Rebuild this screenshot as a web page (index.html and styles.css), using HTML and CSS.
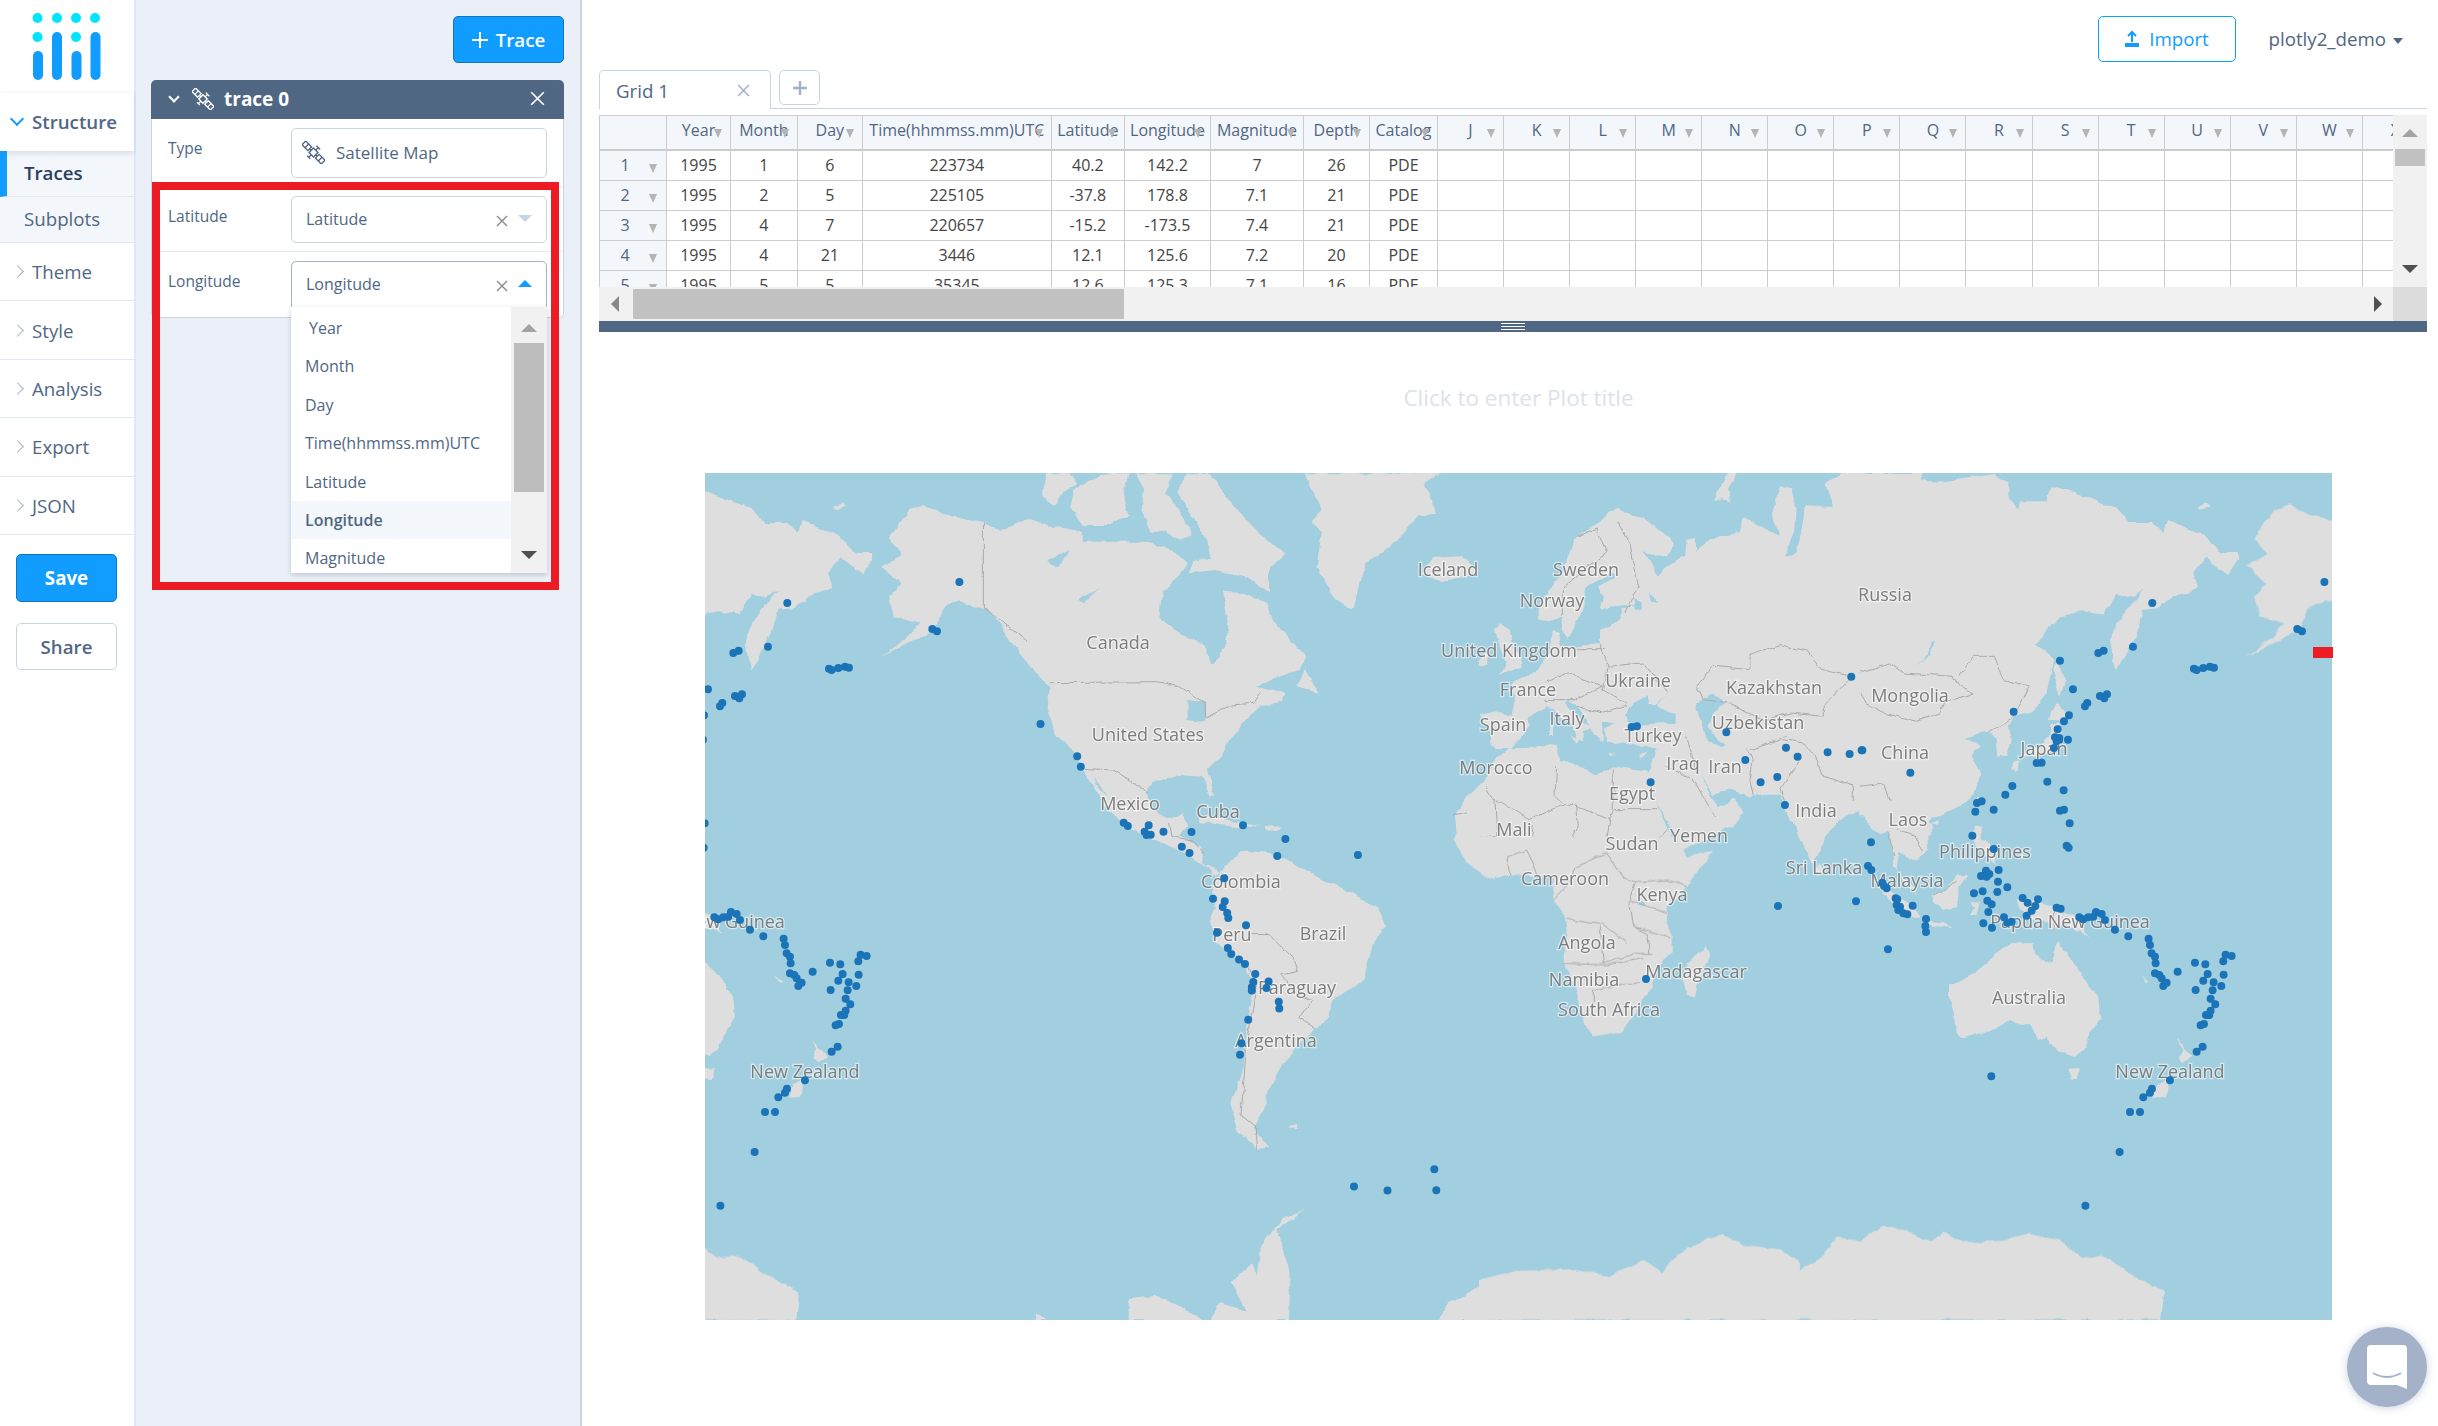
FILE: index.html
```html
<!DOCTYPE html>
<html>
<head>
  <meta charset="utf-8">
  <title>Chart Studio</title>
  <link rel="stylesheet" href="styles.css">
</head>
<body>
<svg class="sprites" width="0" height="0">
  <symbol id="ico-sat" viewBox="0 0 22 22">
    <g transform="rotate(45 11 11)" fill="none" stroke="currentColor" stroke-width="1.3">
      <rect x="8" y="8" width="6" height="6"/>
      <rect x="-2" y="8.5" width="8" height="5"/>
      <rect x="16" y="8.5" width="8" height="5"/>
      <path d="M6 11h2M14 11h2M2 8.5v5M20 8.5v5M11 8v-3M8.5 4.5h5M11 14v3M9 17.5h4"/>
    </g>
  </symbol>
  <symbol id="ico-x" viewBox="0 0 12 12">
    <path d="M1 1l10 10M11 1L1 11" fill="none" stroke="currentColor" stroke-width="1.4"/>
  </symbol>
</svg>

<div class="app">
  <!-- left nav -->
  <nav class="sidebar">
    <div class="logo">
      <svg width="135" height="93" viewBox="0 0 135 93">
        <g fill="#00e5ff">
          <circle cx="37.5" cy="18" r="5"/><circle cx="57" cy="18" r="5"/><circle cx="76" cy="18" r="5"/><circle cx="95" cy="18" r="5"/>
          <circle cx="37.5" cy="37" r="5"/><circle cx="76" cy="37" r="5"/>
        </g>
        <g fill="#119dff">
          <rect x="33" y="51" width="10" height="29" rx="5"/><rect x="52" y="32" width="10" height="48" rx="5"/>
          <rect x="71.500" y="51" width="10" height="29" rx="5"/><rect x="90.500" y="32" width="10" height="48" rx="5"/>
        </g>
      </svg>
    </div>
    <div class="nav-head"><span class="chev chev-down"></span>Structure</div>
    <div class="nav-sub nav-sub-active">Traces</div>
    <div class="nav-sub">Subplots</div>
    <div class="nav-item"><span class="chev"></span>Theme</div>
    <div class="nav-item"><span class="chev"></span>Style</div>
    <div class="nav-item"><span class="chev"></span>Analysis</div>
    <div class="nav-item"><span class="chev"></span>Export</div>
    <div class="nav-item"><span class="chev"></span>JSON</div>
    <button class="btn btn-save" type="button">Save</button>
    <button class="btn btn-share" type="button">Share</button>
  </nav>

  <!-- trace panel -->
  <section class="panel">
    <div class="panel-top">
      <button class="btn btn-trace" type="button">
        <svg width="16" height="16" viewBox="0 0 16 16"><path d="M8 0v16M0 8h16" stroke="#fff" stroke-width="2"/></svg>
        Trace
      </button>
    </div>
    <div class="card">
      <div class="card-head">
        <span class="head-chev"></span>
        <svg class="head-sat" width="22" height="22"><use href="#ico-sat"/></svg>
        <span class="head-title">trace 0</span>
        <svg class="head-x" width="15" height="15"><use href="#ico-x"/></svg>
      </div>
      <div class="field field-type">
        <label class="field-label">Type</label>
        <div class="select select-type">
          <svg class="type-sat" width="23" height="23"><use href="#ico-sat"/></svg>
          Satellite Map
        </div>
      </div>
      <div class="field field-lat">
        <label class="field-label">Latitude</label>
        <div class="select">
          <span class="select-val">Latitude</span>
          <svg class="select-x" width="12" height="12"><use href="#ico-x"/></svg>
          <span class="caret caret-down"></span>
        </div>
      </div>
      <div class="field field-lon">
        <label class="field-label">Longitude</label>
        <div class="select select-open">
          <span class="select-val">Longitude</span>
          <svg class="select-x" width="12" height="12"><use href="#ico-x"/></svg>
          <span class="caret caret-up"></span>
          <div class="dropdown">
            <ul class="options">
              <li class="option option-first">Year</li>
              <li class="option">Month</li>
              <li class="option">Day</li>
              <li class="option">Time(hhmmss.mm)UTC</li>
              <li class="option">Latitude</li>
              <li class="option option-active">Longitude</li>
              <li class="option">Magnitude</li>
            </ul>
            <div class="drop-scroll">
              <span class="tri tri-up tri-grey"></span>
              <span class="drop-thumb"></span>
              <span class="tri tri-down tri-dark"></span>
            </div>
          </div>
        </div>
      </div>
    </div>
    <div class="redbox"></div>
  </section>

  <main class="main">
    <header class="topbar">
      <button class="btn btn-import" type="button">
        <svg width="16" height="17" viewBox="0 0 16 17"><path d="M8 12V2M4 6l4-4 4 4" fill="none" stroke="#119dff" stroke-width="2"/><rect x="1" y="13" width="14" height="4" fill="#119dff"/></svg>
        Import
      </button>
      <span class="user">plotly2_demo<span class="user-caret"></span></span>
    </header>

    <div class="tabs">
      <div class="tab">Grid 1<svg class="tab-x" width="13" height="13"><use href="#ico-x"/></svg></div>
      <div class="tab-add">
        <svg width="14" height="14" viewBox="0 0 14 14"><path d="M7 0v14M0 7h14" stroke="#a2b1c6" stroke-width="2.4"/></svg>
      </div>
    </div>

    <div class="grid-wrap">
      <div class="grid-view">
        <table class="grid">
          <colgroup>
            <col class="c-idx"><col class="c-year"><col class="c-month"><col class="c-day"><col class="c-time"><col class="c-lat"><col class="c-lon"><col class="c-mag"><col class="c-depth"><col class="c-cat">
            <col class="c-col"><col class="c-col"><col class="c-col"><col class="c-col"><col class="c-col"><col class="c-col"><col class="c-col"><col class="c-col"><col class="c-col"><col class="c-col"><col class="c-col"><col class="c-col"><col class="c-col"><col class="c-col"><col class="c-col">
          </colgroup>
          <tr>
            <th></th><th>Year<i></i></th><th>Month<i></i></th><th>Day<i></i></th><th>Time(hhmmss.mm)UTC<i></i></th><th>Latitude<i></i></th><th>Longitude<i></i></th><th>Magnitude<i></i></th><th>Depth<i></i></th><th>Catalog<i></i></th>
            <th>J<i></i></th><th>K<i></i></th><th>L<i></i></th><th>M<i></i></th><th>N<i></i></th><th>O<i></i></th><th>P<i></i></th><th>Q<i></i></th><th>R<i></i></th><th>S<i></i></th><th>T<i></i></th><th>U<i></i></th><th>V<i></i></th><th>W<i></i></th><th>X<i></i></th>
          </tr>
          <tr><th class="row-no">1<i></i></th><td>1995</td><td>1</td><td>6</td><td>223734</td><td>40.2</td><td>142.2</td><td>7</td><td>26</td><td>PDE</td><td></td><td></td><td></td><td></td><td></td><td></td><td></td><td></td><td></td><td></td><td></td><td></td><td></td><td></td><td></td></tr>
          <tr><th class="row-no">2<i></i></th><td>1995</td><td>2</td><td>5</td><td>225105</td><td>-37.8</td><td>178.8</td><td>7.1</td><td>21</td><td>PDE</td><td></td><td></td><td></td><td></td><td></td><td></td><td></td><td></td><td></td><td></td><td></td><td></td><td></td><td></td><td></td></tr>
          <tr><th class="row-no">3<i></i></th><td>1995</td><td>4</td><td>7</td><td>220657</td><td>-15.2</td><td>-173.5</td><td>7.4</td><td>21</td><td>PDE</td><td></td><td></td><td></td><td></td><td></td><td></td><td></td><td></td><td></td><td></td><td></td><td></td><td></td><td></td><td></td></tr>
          <tr><th class="row-no">4<i></i></th><td>1995</td><td>4</td><td>21</td><td>3446</td><td>12.1</td><td>125.6</td><td>7.2</td><td>20</td><td>PDE</td><td></td><td></td><td></td><td></td><td></td><td></td><td></td><td></td><td></td><td></td><td></td><td></td><td></td><td></td><td></td></tr>
          <tr><th class="row-no">5<i></i></th><td>1995</td><td>5</td><td>5</td><td>35345</td><td>12.6</td><td>125.3</td><td>7.1</td><td>16</td><td>PDE</td><td></td><td></td><td></td><td></td><td></td><td></td><td></td><td></td><td></td><td></td><td></td><td></td><td></td><td></td><td></td></tr>
        </table>
      </div>
      <div class="vscroll">
        <span class="tri tri-up tri-grey"></span>
        <span class="vthumb"></span>
        <span class="tri tri-down tri-dark vdown"></span>
      </div>
      <div class="hscroll">
        <span class="tri tri-left"></span>
        <span class="hthumb"></span>
        <span class="tri tri-right"></span>
      </div>
      <div class="corner"></div>
    </div>
    <div class="splitter"><span class="grip"></span></div>

    <div class="plot">
      <div class="plot-title">Click to enter Plot title</div>
      <div class="map">
        <svg class="map-svg" width="1627" height="847" viewBox="705 473 1627 847">
          <defs>
            <!-- roughens the hand traced coasts -->
            <filter id="rough" filterUnits="userSpaceOnUse" x="705" y="473" width="1627" height="847">
              <feTurbulence type="fractalNoise" baseFrequency="0.07" numOctaves="3" seed="4"/>
              <feDisplacementMap in="SourceGraphic" scale="6" xChannelSelector="R" yChannelSelector="G"/>
            </filter>
            <g id="land">
              <!-- americas -->
              <g transform="translate(690 460) scale(.5102 .3333)">
                <polygon class="ld" points="390,230 430,150 460,135 500,165 575,190 610,210 660,175 700,195 770,215 770,245 890,245 950,270 975,310 960,350 925,395 920,470 960,520 1010,555 1020,620 1040,590 1050,550 1055,500 1045,395 1090,400 1130,430 1140,480 1208,590 1195,630 1135,660 1110,680 1165,700 1160,725 1120,735 1090,780 1060,830 1040,890 1015,930 1028,1005 1020,1010 1005,950 960,945 910,965 895,1000 905,1050 935,1075 965,1060 975,1100 960,1125 1000,1160 1010,1215 1040,1235 1030,1245 1005,1210 960,1175 900,1130 850,1095 810,1030 790,975 770,930 760,890 715,820 700,760 705,680 670,625 640,570 600,470 575,445 530,420 500,440 480,505 420,555 375,590 420,540 450,490 400,470 390,410 415,370 375,320 415,285"/>
                <polygon class="ld" points="690,105 700,40 745,40 760,70 730,100 715,135"/>
                <polygon class="ld" points="755,85 800,45 860,40 850,100 860,170 820,195 770,195 745,140"/>
                <polygon class="ld" points="875,40 945,40 935,100 960,150 985,230 960,240 930,215 905,215 885,150 890,90"/>
                <polygon class="ld" points="975,40 1020,40 1060,130 1110,210 1165,285 1135,320 1135,400 1090,350 1030,330 975,340 985,300 1020,290 1010,230 975,150 955,90"/>
                <polygon class="ld" points="1205,40 1470,40 1440,70 1455,130 1460,165 1430,165 1385,240 1325,310 1300,450 1265,420 1230,320 1240,215 1215,185 1240,150 1215,80"/>
                <polygon class="ld" points="1190,680 1205,625 1230,695"/>
                <polygon class="ld" points="1000,1068 1080,1085 1115,1095 1080,1103 1000,1085"/>
                <polygon class="ld" points="1125,1098 1160,1100 1150,1110 1125,1108"/>
                <polygon class="wt" points="975,720 1010,725 1012,770 1005,790 975,780"/>
                <polygon class="wt" points="790,945 818,1012 800,985"/>
                <polygon class="wt" points="700,300 745,270 720,325"/>
                <polygon class="wt" points="760,420 805,385 770,430"/>
                <polyline class="bd" points="575,190 575,445 600,470 640,520 660,545"/>
                <polyline class="bd" points="705,668 915,665 960,680 1010,730 1010,775 1060,735 1105,730 1120,695"/>
                <polyline class="bd" points="766,925 830,930 880,980 900,1000"/>
                <polyline class="bd" points="940,1090 945,1130 985,1140 1005,1180"/>
                <polyline class="bd" points="1090,1170 1085,1220 1110,1280 1105,1340 1050,1310"/>
                <polyline class="bd" points="1110,1290 1180,1290 1240,1260"/>
              </g>
              <!-- south america, antarctica -->
              <g transform="translate(690 900) scale(.5102 .3356)">
                <polygon class="ld" points="1040,-85 1080,-149 1140,-139 1180,-110 1240,-60 1300,-20 1345,25 1365,75 1340,120 1320,240 1260,300 1250,350 1195,425 1160,490 1130,580 1130,610 1105,680 1135,735 1112,745 1075,690 1060,610 1085,500 1095,330 1105,250 1085,190 1030,130 1020,50 1030,0 1025,-40"/>
                <polygon class="ld" points="1170,680 1190,670 1190,682"/>
                <polygon class="ld" points="860,1252 860,1190 910,1180 960,1210 1005,1252"/>
                <polygon class="ld" points="1020,1252 1040,1200 1090,1225 1060,1140 1100,1085 1110,1120 1120,1030 1160,950 1205,920 1150,980 1175,1110 1172,1252"/>
                <polygon class="ld" points="1470,1252 1480,1210 1568,1135 1568,1252"/>
                <polygon class="ld" points="680,1252 680,1235 700,1252"/>
                <polyline class="bd" points="1100,100 1135,100 1180,170 1190,210 1160,220 1195,290 1220,300 1195,350 1225,385"/>
                <polyline class="bd" points="1095,200 1110,250 1090,450 1080,640 1110,680 1112,745"/>
              </g>
              <g transform="translate(1480 900) scale(.6109 .3356)">
                <polygon class="ld" points="0,1135 60,1105 150,1100 210,1120 270,1075 300,1110 320,1060 395,990 430,1030 495,1045 520,1075 525,1105 550,1080 585,1005 620,1015 660,970 700,985 740,1015 760,990 790,1020 860,1015 900,995 950,1015 985,1065 1020,1060 1060,1110 1120,1165 1115,1252 0,1252"/>
              </g>
              <!-- europe, west asia -->
              <g transform="translate(1400 473) scale(.3333)">
                <polygon class="ld" points="1560,0 1560,1000 1430,1000 1395,1012 1345,1022 1275,1090 1265,1130 1232,1175 1215,1130 1190,1065 1170,1030 1150,1005 1140,965 1100,965 1050,972 1010,960 990,950 960,955 940,970 915,930 900,905 935,975 955,1000 995,985 1000,975 1033,1015 1000,1055 950,1085 895,1110 850,1130 835,1120 820,1075 795,1030 770,985 755,945 740,905 755,880 770,830 745,825 700,810 650,815 622,805 612,770 640,755 605,745 610,805 580,785 560,740 530,700 505,680 495,690 520,720 550,750 575,765 548,775 552,805 530,795 515,755 470,720 440,700 400,720 382,738 390,755 360,795 330,825 290,825 272,812 265,770 243,725 285,715 335,725 345,680 330,645 345,625 400,600 430,570 450,540 452,505 455,470 478,480 482,520 530,520 600,510 600,470 665,440 665,410 715,395 620,405 598,410 610,370 595,340 650,310 640,300 600,320 555,345 550,400 520,470 505,500 485,470 490,430 450,445 418,440 415,400 440,360 490,300 510,230 530,190 590,150 650,105 705,130 730,135 760,160 810,190 825,220 800,250 760,245 730,235 755,280 775,315 800,285 855,250 860,200 885,195 885,230 950,190 1020,180 1030,130 1075,155 1135,190 1115,110 1140,40 1175,45 1190,110 1185,180 1155,250 1190,240 1205,170 1215,100 1295,105 1290,55 1270,30 1330,0"/>
                <polygon class="ld" points="945,85 960,45 985,0 1010,0 985,50 990,90 970,75"/>
                <polygon class="ld" points="300,450 325,470 335,510 360,550 370,580 300,605 320,570 305,540 285,470"/>
                <polygon class="ld" points="235,560 265,535 265,575 240,582"/>
                <polygon class="ld" points="60,300 100,255 185,250 235,300 130,325"/>
                <polygon class="ld" points="510,790 545,795 535,810"/>
                <polygon class="ld" points="452,745 462,745 462,785 450,785"/>
                <polygon class="ld" points="720,845 745,838 725,855"/>
                <polygon class="ld" points="620,843 650,845 625,850"/>
                <polygon class="ld" points="1255,1170 1270,1190 1255,1210 1245,1190"/>
                <polygon class="wt" points="675,725 700,690 740,670 745,690 775,690 800,660 775,695 830,730 830,750 790,750 720,755 680,750"/>
                <polygon class="wt" points="890,690 940,660 980,690 940,720 925,760 960,810 975,815 960,825 920,800 905,740 890,710"/>
                <polygon class="wt" points="700,375 725,385 725,410 705,410"/>
                <polygon class="wt" points="750,360 765,370 770,390 755,385"/>
                <!-- africa north -->
                <polygon class="ld" points="325,825 290,855 250,925 200,975 165,1025 170,1085 160,1100 815,1100 780,1010 750,930 740,895 700,890 640,880 590,905 540,880 480,860 470,820 440,815 380,825"/>
                <g class="bds">
                  <polyline class="bd" points="890,640 940,580 1050,590 1050,545 1140,515 1225,535 1265,590 1355,610"/>
                  <polyline class="bd" points="890,640 910,680 990,690 1040,720 1100,740 1170,720 1270,730 1270,700 1330,640 1355,610"/>
                  <polyline class="bd" points="1150,800 1210,810 1250,850 1270,910 1360,940 1360,980 1390,990 1430,930 1470,930 1480,990"/>
                  <polyline class="bd" points="1040,830 1060,860 1050,920 1060,970"/>
                  <polyline class="bd" points="1200,860 1140,950 1160,1000"/>
                  <polyline class="bd" points="1050,830 1110,810 1160,790"/>
                  <polyline class="bd" points="860,790 890,900"/>
                  <polyline class="bd" points="800,880 880,920 950,1040"/>
                  <polyline class="bd" points="600,515 625,580 610,650 680,690"/>
                  <polyline class="bd" points="620,580 730,570 800,660"/>
                  <polyline class="bd" points="530,530 620,530"/>
                  <polyline class="bd" points="650,140 690,210 715,340 675,420"/>
                  <polyline class="bd" points="530,190 590,165 620,240 490,340 490,430"/>
                  <polyline class="bd" points="440,630 500,600 610,640 520,680 430,680"/>
                  <polyline class="bd" points="530,700 610,720 680,700"/>
                  <polyline class="bd" points="260,940 280,975 390,1040 490,995 530,1000 535,1060 510,1110"/>
                  <polyline class="bd" points="640,890 640,1010 775,1010"/>
                  <polyline class="bd" points="525,1000 630,1040 640,1010"/>
                  <polyline class="bd" points="630,1040 620,1100 610,1140"/>
                  <polyline class="bd" points="470,880 465,970 490,995"/>
                  <polyline class="bd" points="200,1020 160,1025"/>
                  <polyline class="bd" points="285,975 290,1090 215,1095 165,1100"/>
                  <polyline class="bd" points="400,1060 390,1130 220,1100"/>
                  <polyline class="bd" points="510,1110 500,1130 400,1120"/>
                  <polyline class="bd" points="610,1140 730,1140 800,1070"/>
                </g>
              </g>
              <!-- africa south -->
              <g transform="translate(1420 820) scale(.3333)">
                <polygon class="ld" points="102,60 140,130 210,180 300,165 400,170 400,240 435,290 440,340 430,420 465,500 500,625 520,650 600,635 660,565 665,540 700,500 705,450 755,395 755,345 740,310 745,260 800,200 850,130 880,95 800,110 780,80 755,50 102,50"/>
                <polygon class="ld" points="855,370 868,405 835,490 825,528 800,525 790,480 800,430 845,395"/>
                <polygon class="wt" points="655,245 675,245 670,258 655,258"/>
                <polyline class="bd" points="270,170 260,110 320,90 360,170"/>
                <polyline class="bd" points="560,100 470,140 440,200 400,240"/>
                <polyline class="bd" points="560,100 610,170 650,185 740,180 800,200"/>
                <polyline class="bd" points="650,185 630,250 640,320 680,340 690,400"/>
                <polyline class="bd" points="640,320 750,350"/>
                <polyline class="bd" points="440,295 540,310 550,430 650,400 700,400"/>
                <polyline class="bd" points="430,430 560,435 670,415"/>
                <polyline class="bd" points="520,510 620,490 660,490"/>
                <polyline class="bd" points="520,510 520,560"/>
                <polyline class="bd" points="630,240 740,280"/>
                <polyline class="bd" points="545,310 620,370"/>
              </g>
              <!-- east asia -->
              <g transform="translate(1860 473) scale(.3333)">
                <polygon class="ld" points="0,0 190,0 180,25 250,25 400,0 445,30 445,70 475,110 480,85 560,85 570,40 640,60 770,105 805,150 880,150 910,180 920,140 1020,180 1085,240 1130,240 1135,260 1105,305 1035,255 1000,300 1015,345 940,370 900,405 850,410 830,480 790,560 765,590 750,500 770,450 850,350 820,365 790,370 770,365 730,425 670,415 600,430 520,515 545,525 580,560 560,660 510,720 465,730 445,760 450,810 440,848 415,850 410,800 390,775 360,780 315,795 345,810 360,820 335,850 365,900 350,950 300,1000 240,1030 0,1030"/>
                <polygon class="ld" points="590,690 620,720 600,745 570,745 575,720"/>
                <polygon class="ld" points="575,760 600,750 610,800 585,830 530,850 490,850 500,835 550,810 570,790"/>
                <polygon class="ld" points="455,870 475,865 470,895 455,890"/>
                <polygon class="ld" points="585,570 605,590 615,625 600,670 590,640 580,590"/>
                <polygon class="ld" points="355,975 365,975 350,1010"/>
                <polygon class="ld" points="1010,100 1040,88 1050,98 1020,108"/>
                <polygon class="wt" points="225,505 200,560 160,585 195,560 215,510"/>
                <polyline class="bd" points="0,600 95,575 130,600 280,610 300,640 340,660 250,690 240,720 170,745 70,720 20,695 0,660"/>
                <polyline class="bd" points="300,610 340,550 400,550 430,620 510,640 480,700 460,730"/>
                <polyline class="bd" points="390,775 465,730"/>
                <polyline class="bd" points="0,940 70,930 90,990"/>
              </g>
              <!-- south east asia, oceania -->
              <g transform="translate(1800 800) scale(.3333)">
                <polygon class="ld" points="150,0 195,35 215,90 245,105 265,95 275,140 285,175 278,195 305,225 345,265 348,285 310,240 290,205 298,155 325,175 350,185 385,145 382,115 400,85 390,55 420,40 470,15 505,0"/>
                <polygon class="ld" points="450,555 540,510 600,450 640,430 700,430 705,465 755,490 775,420 800,460 850,530 895,590 900,650 870,700 850,750 820,770 770,750 740,710 715,720 690,670 630,665 560,695 490,715 470,700 465,640 450,590"/>
                <polygon class="ld" points="805,805 840,805 830,838 815,835"/>
                <polygon class="ld" points="1130,715 1150,745 1180,770 1150,790 1135,775 1145,750"/>
                <polygon class="ld" points="1110,835 1095,890 1060,893 1065,860"/>
                <polygon class="ld" points="650,300 675,290 720,310 780,330 830,350 865,408 840,390 790,375 760,390 740,370 690,350 660,330"/>
                <polygon class="ld" points="395,285 440,270 470,225 500,225 475,260 475,320 430,330 405,310"/>
                <polygon class="ld" points="225,230 280,280 340,320 360,350 330,350 280,310 240,265"/>
                <polygon class="ld" points="370,365 430,370 465,385 400,378"/>
                <polygon class="ld" points="510,310 540,300 530,345 510,345 525,320"/>
                <polygon class="ld" points="525,80 545,80 545,120 575,130 590,200 560,170 520,120"/>
                <polygon class="ld" points="395,70 415,60 410,75"/>
                <polygon class="ld" points="1025,530 1050,545 1040,548"/>
                <polyline class="bd" points="265,100 285,170"/>
                <polyline class="bd" points="290,90 345,110 370,150"/>
                <polyline class="bd" points="400,285 440,270 470,240"/>
                <polyline class="bd" points="760,330 760,390"/>
              </g>
            </g>

            <g id="quakes">
              <g transform="translate(1860 473) scale(.3333)">
                <path class="dots-z" d="M600 563h0M715 540h0M731 533h0M877 390h0M819 521h0M1002 587h0M1010 591h0M1030 585h0M1050 581h0M1062 584h0M639 649h0M720 669h0M741 664h0M733 676h0M682 690h0M675 700h0M461 716h0M627 727h0M612 745h0M593 769h0M624 800h0M585 793h0M598 795h0M590 805h0M598 800h0M582 825h0M530 870h0M545 869h0M562 926h0M611 952h0M457 939h0M436 965h0M365 985h0M351 990h0M346 1016h0M401 1010h0M600 1013h0M612 1010h0M629 1051h0M620 1118h0M626 1124h0M337 1088h0M401 1128h0M33 1108h0M7 832h0M151 899h0"/>
              </g>
              <g transform="translate(1800 800) scale(.3333)">
                <path class="dots-z" d="M204 198h0M214 210h0M247 248h0M252 258h0M260 265h0M287 295h0M292 298h0M168 304h0M290 315h0M300 320h0M295 330h0M310 340h0M322 343h0M338 317h0M378 357h0M376 378h0M378 396h0M264 448h0M596 210h0M558 212h0M568 222h0M543 228h0M560 230h0M594 245h0M622 262h0M592 276h0M548 274h0M522 280h0M562 302h0M575 313h0M565 336h0M550 370h0M576 383h0M612 352h0M622 368h0M635 365h0M668 294h0M683 308h0M714 298h0M706 318h0M695 332h0M680 347h0M770 323h0M782 326h0M838 352h0M850 358h0M865 352h0M880 350h0M888 336h0M905 342h0M915 360h0M945 389h0M985 409h0M1046 416h0M1050 435h0M1055 460h0M1065 470h0M1067 490h0M1065 520h0M1078 525h0M1085 535h0M1100 548h0M1090 558h0M1133 515h0M1185 488h0M1216 493h0M1277 464h0M1295 468h0M1270 484h0M1271 524h0M1223 522h0M1210 542h0M1241 547h0M1264 558h0M1187 570h0M1238 571h0M1232 596h0M1246 613h0M1232 632h0M1228 645h0M1218 645h0M1202 676h0M1212 672h0M1208 740h0M1190 755h0M1110 841h0M1056 866h0M1050 878h0M1030 892h0M574 829h0"/>
              </g>
              <g transform="translate(1400 473) scale(.3333)">
                <path class="dots-z" d="M1354 611h0M1158 824h0M1193 851h0M1283 838h0M1349 843h0M1385 832h0M1036 861h0M1132 912h0M1082 928h0M1155 996h0M752 928h0M979 778h0M695 762h0M711 760h0"/>
              </g>
              <path class="dots-p" d="M2130 1112h0M2140 1112h0M2119.600 1152h0M2085.400 1205.700h0M1778 906h0M1646 979h0M1434.300 1169.300h0M1436.300 1190.300h0M1354 1186.600h0M1387.500 1190.600h0M959.400 582h0M932.300 629h0M937 631.300h0M1040.500 724h0M1077.200 756.300h0M1080.800 766.700h0M1123.700 822.700h0M1127.800 826h0M1148.700 825.300h0M1144.600 831.700h0M1146.600 835h0M1150.700 834.700h0M1163.500 831.700h0M1191.500 832h0M1243 825.300h0M1181.800 846.700h0M1189.500 853h0M1285.400 839h0M1277.300 856h0M1357.900 855h0M1224.200 878.300h0M1213 898.700h0M1224.700 901.300h0M1222.700 907h0M1227.200 913h0M1228.300 918h0M1246 925.300h0M1217 932.700h0M1227.800 948h0M1231.300 954h0M1239 959.400h0M1245 964h0M1255.300 974h0M1253.300 982h0M1251.800 987.200h0M1251.800 990.600h0M1268.600 981.500h0M1266.500 988h0M1278.800 1001.700h0M1279.300 1008.400h0M1248.200 1019.800h0M1241.500 1043.300h0M1240 1054.700h0"/>
            </g>
          </defs>

          <g class="rough">
            <use href="#land"/>
            <use href="#land" x="-1365"/>
            <use href="#land" x="1365"/>
          </g>

          <g class="labels">
            <text x="1448" y="576">Iceland</text>
            <text x="1586" y="576">Sweden</text>
            <text x="1552" y="607">Norway</text>
            <text x="1509" y="657">United Kingdom</text>
            <text x="1638" y="687">Ukraine</text>
            <text x="1528" y="696">France</text>
            <text x="1774" y="694">Kazakhstan</text>
            <text x="1910" y="702">Mongolia</text>
            <text x="1885" y="601">Russia</text>
            <text x="1503" y="731">Spain</text>
            <text x="1567" y="725">Italy</text>
            <text x="1758" y="729">Uzbekistan</text>
            <text x="1653" y="742">Turkey</text>
            <text x="1683" y="770">Iraq</text>
            <text x="1725" y="773">Iran</text>
            <text x="1905" y="759">China</text>
            <text x="2044" y="755">Japan</text>
            <text x="1496" y="774">Morocco</text>
            <text x="1632" y="800">Egypt</text>
            <text x="1816" y="817">India</text>
            <text x="1908" y="826">Laos</text>
            <text x="1514" y="836">Mali</text>
            <text x="1699" y="842">Yemen</text>
            <text x="1632" y="850">Sudan</text>
            <text x="1985" y="858">Philippines</text>
            <text x="1824" y="874">Sri Lanka</text>
            <text x="1565" y="885">Cameroon</text>
            <text x="1907" y="887">Malaysia</text>
            <text x="1662" y="901">Kenya</text>
            <text x="2070" y="928">Papua New Guinea</text>
            <text x="705" y="928">Papua New Guinea</text>
            <text x="1587" y="949">Angola</text>
            <text x="1584" y="986">Namibia</text>
            <text x="1696" y="978">Madagascar</text>
            <text x="1609" y="1016">South Africa</text>
            <text x="2029" y="1004">Australia</text>
            <text x="2170" y="1078">New Zealand</text>
            <text x="805" y="1078">New Zealand</text>
            <text x="1118" y="649">Canada</text>
            <text x="1148" y="741">United States</text>
            <text x="1130" y="810">Mexico</text>
            <text x="1218" y="818">Cuba</text>
            <text x="1241" y="888">Colombia</text>
            <text x="1323" y="940">Brazil</text>
            <text x="1232" y="941">Peru</text>
            <text x="1297" y="994">Paraguay</text>
            <text x="1276" y="1047">Argentina</text>
          </g>

          <use href="#quakes"/>
          <use href="#quakes" x="-1365"/>
          <use href="#quakes" x="1365"/>
        </svg>
        <span class="red-mark"></span>
      </div>
    </div>
  </main>
</div>

<div class="chat">
  <svg width="40" height="44" viewBox="0 0 40 44">
    <path d="M4 0h32a4 4 0 0 1 4 4v40l-10-4H4a4 4 0 0 1-4-4V4a4 4 0 0 1 4-4z" fill="#fff"/>
    <path d="M6 28q14 8 28 0" fill="none" stroke="#a4b2c9" stroke-width="2"/>
  </svg>
</div>
</body>
</html>
```

FILE: styles.css
```css
* {
  box-sizing: border-box;
}

html, body {
  margin: 0;
  height: 100%;
}

body {
  font-family: "Open Sans", "Noto Sans", sans-serif;
  font-size: 16px;
  color: #506784;
  background: #fff;
  overflow: hidden;
}

.sprites {
  position: absolute;
}

.app {
  display: flex;
  width: 2438px;
  height: 1426px;
}

/* left nav */
.sidebar {
  width: 136px;
  flex: none;
  display: flex;
  flex-direction: column;
  border-right: 2px solid #dfe8f3;
  background: #fff;
}

.logo {
  height: 93px;
}

.logo svg {
  display: block;
}

.nav-head {
  height: 58px;
  display: flex;
  align-items: center;
  padding: 0 0 2px 11px;
  font-size: 18.700px;
  font-weight: 600;
  color: #506784;
  box-shadow: 0 2px 6px rgba(80, 103, 132, .2);
  position: relative;
}

.nav-sub {
  height: 46px;
  padding-left: 24px;
  line-height: 44px;
  font-size: 18.700px;
  background: #f3f6fa;
  border-bottom: 1px solid #dfe8f3;
}

.nav-sub-active {
  font-weight: 600;
  color: #2a3f5f;
  border-left: 7px solid #119dff;
  padding-left: 17px;
}

.nav-item {
  height: 58.400px;
  display: flex;
  align-items: center;
  padding-left: 14px;
  font-size: 18.700px;
  border-bottom: 1px solid #dfe8f3;
}

.chev {
  width: 9px;
  height: 9px;
  margin-right: 10px;
  border-top: 1.5px solid #a2b1c6;
  border-right: 1.5px solid #a2b1c6;
  transform: rotate(45deg);
  margin-left: -1px;
}

.chev-down {
  width: 10px;
  height: 10px;
  margin: -5px 10px 0 1px;
  border-color: #119dff;
  border-width: 2px;
  transform: rotate(135deg);
}

.btn {
  font-family: inherit;
  font-size: 18.700px;
  border-radius: 5px;
  cursor: pointer;
}

.btn-save {
  width: 101px;
  height: 48px;
  margin: 19px 0 0 16px;
  color: #fff;
  font-weight: 700;
  background: #119dff;
  border: 1px solid #0d76bf;
}

.btn-share {
  width: 101px;
  height: 47px;
  margin: 21px 0 0 16px;
  color: #506784;
  font-weight: 600;
  background: #fff;
  border: 1px solid #c8d4e3;
}

/* trace panel */
.panel {
  width: 446px;
  flex: none;
  position: relative;
  background: #ebf0f8;
  border-right: 2px solid #c8d4e3;
  padding: 16px 16px 0 15px;
}

.panel-top {
  display: flex;
  justify-content: flex-end;
  height: 64px;
}

.btn-trace {
  width: 111px;
  height: 47px;
  display: flex;
  align-items: center;
  justify-content: center;
  gap: 8px;
  padding-top: 1px;
  color: #fff;
  font-weight: 600;
  background: #119dff;
  border: 1px solid #0d76bf;
}

.card {
  width: 413px;
  height: 238px;
  background: #fff;
  border: 1px solid #c8d4e3;
  border-top: 0;
  border-radius: 5px 5px 5px 5px;
}

.card-head {
  height: 39px;
  margin: 0 -1px;
  padding-bottom: 2px;
  display: flex;
  align-items: center;
  color: #fff;
  background: #506784;
  border-radius: 5px 5px 0 0;
}

.head-chev {
  width: 8px;
  height: 8px;
  margin: -4px 0 0 19px;
  border-right: 2px solid #fff;
  border-bottom: 2px solid #fff;
  transform: rotate(45deg);
}

.head-sat {
  margin-left: 14px;
}

.head-title {
  margin-left: 10px;
  font-size: 19px;
  font-weight: 700;
}

.head-x {
  margin-left: auto;
  margin-right: 19px;
}

.field {
  display: flex;
  align-items: flex-start;
  border-bottom: 1px solid #dfe8f3;
}

.field-type {
  height: 69px;
  padding-top: 9px;
}

.field-lat {
  height: 64px;
  padding-top: 8px;
}

.field-lon {
  height: 65px;
  padding-top: 9px;
  border-bottom: 0;
}

.field-label {
  width: 139px;
  flex: none;
  padding: 9px 0 0 16px;
  font-size: 15.500px;
  line-height: 22px;
}

.field-lon .field-label {
  padding-top: 9px;
}

.select {
  width: 256px;
  height: 47px;
  position: relative;
  display: flex;
  align-items: center;
  padding: 0 14px 2px;
  font-size: 16px;
  background: #fff;
  border: 1px solid #c8d4e3;
  border-radius: 5px;
}

.select-type {
  height: 50px;
  font-size: 17px;
  padding-left: 10px;
}

.type-sat {
  margin-right: 11px;
}

.select-open {
  border-color: #a2b1c6;
  border-radius: 5px 5px 0 0;
}

.select-val {
  flex: 1;
}

.select-x {
  color: #888;
  margin-right: 10px;
  margin-top: 5px;
}

.caret {
  width: 0;
  height: 0;
  border-left: 7px solid transparent;
  border-right: 7px solid transparent;
  margin-right: 0;
}

.caret-down {
  border-top: 7px solid #c8d4e3;
}

.caret-up {
  border-bottom: 7px solid #119dff;
}

.dropdown {
  position: absolute;
  z-index: 3;
  top: 100%;
  left: -1px;
  width: 256px;
  height: 266px;
  display: flex;
  background: #fff;
  box-shadow: 0 2px 5px rgba(80, 103, 132, .3);
}

.options {
  width: 220px;
  margin: 0;
  padding: 2px 0 0;
  list-style: none;
  overflow: hidden;
}

.option {
  height: 38.400px;
  line-height: 38px;
  padding-left: 14px;
  font-size: 16px;
  white-space: nowrap;
}

.option-first {
  padding-left: 18px;
}

.option-active {
  font-weight: 600;
  background: #f3f6fa;
}

.drop-scroll {
  width: 36px;
  position: relative;
  background: #f1f1f1;
  border-left: 3px solid #f1f1f1;
}

.drop-scroll .tri-up {
  position: absolute;
  top: 17px;
  left: 7px;
}

.drop-scroll .tri-down {
  position: absolute;
  bottom: 14px;
  left: 7px;
}

.drop-thumb {
  position: absolute;
  top: 36px;
  left: 0;
  width: 30px;
  height: 149px;
  background: #bdbdbd;
}

.redbox {
  position: absolute;
  z-index: 4;
  left: 16px;
  top: 182px;
  width: 407px;
  height: 408px;
  border: 8px solid #ed1c24;
  pointer-events: none;
}

/* scroll arrows */
.tri {
  display: block;
  width: 0;
  height: 0;
}

.tri-up {
  border-left: 8px solid transparent;
  border-right: 8px solid transparent;
  border-bottom: 8px solid #a3a3a3;
}

.tri-down {
  border-left: 8px solid transparent;
  border-right: 8px solid transparent;
  border-top: 8px solid #505050;
}

.tri-left {
  border-top: 8px solid transparent;
  border-bottom: 8px solid transparent;
  border-right: 8px solid #888;
}

.tri-right {
  border-top: 8px solid transparent;
  border-bottom: 8px solid transparent;
  border-left: 8px solid #505050;
}

/* main column */
.main {
  flex: 1;
  min-width: 0;
  padding: 0 11px 0 17px;
}

.topbar {
  height: 70px;
  display: flex;
  align-items: flex-start;
  justify-content: flex-end;
  padding: 16px 24px 0 0;
}

.btn-import {
  width: 138px;
  height: 46px;
  display: flex;
  align-items: center;
  justify-content: center;
  gap: 9px;
  padding-bottom: 2px;
  color: #119dff;
  background: #fff;
  border: 1px solid #119dff;
}

.user {
  margin-left: 33px;
  font-size: 18.700px;
  line-height: 46px;
}

.user-caret {
  display: inline-block;
  margin-left: 7px;
  vertical-align: middle;
  border-left: 5px solid transparent;
  border-right: 5px solid transparent;
  border-top: 6px solid #506784;
}

.tabs {
  height: 39px;
  display: flex;
  align-items: flex-start;
  gap: 8px;
  border-bottom: 1px solid #c8d4e3;
}

.tab {
  width: 172px;
  height: 39px;
  position: relative;
  padding-left: 16px;
  font-size: 18.700px;
  line-height: 40px;
  background: #fff;
  border: 1px solid #c8d4e3;
  border-bottom: 0;
  border-radius: 5px 5px 0 0;
}

.tab-x {
  position: absolute;
  right: 20px;
  top: 13px;
  color: #a2b1c6;
}

.tab-add {
  width: 41px;
  height: 35px;
  display: flex;
  align-items: center;
  justify-content: center;
  border: 1px solid #c8d4e3;
  border-radius: 5px;
}

.grid-wrap {
  margin-top: 6px;
  display: grid;
  grid-template-columns: 1794px 34px;
  grid-template-rows: 172px 34px;
}

.grid-view {
  overflow: hidden;
}

.grid {
  table-layout: fixed;
  width: 1829px;
  margin-top: -1px;
  border-collapse: collapse;
  font-size: 16px;
}

.c-idx { width: 67px; }
.c-year { width: 64px; }
.c-month { width: 66.600px; }
.c-day { width: 65.400px; }
.c-time { width: 188.700px; }
.c-lat { width: 73.300px; }
.c-lon { width: 86px; }
.c-mag { width: 93px; }
.c-depth { width: 66px; }
.c-cat { width: 68px; }
.c-col { width: 66.070px; }

.grid th {
  height: 35px;
  position: relative;
  padding: 0 0 5px;
  font-weight: 400;
  color: #506784;
  white-space: nowrap;
  overflow: hidden;
  background: #f3f6fa;
  border: 1px solid #ccc;
  border-bottom-width: 2px;
  border-top-width: 2px;
}

.grid th i {
  position: absolute;
  right: 8px;
  top: 13px;
  border-left: 4px solid transparent;
  border-right: 4px solid transparent;
  border-top: 9px solid #b4b4b4;
}

.grid .row-no {
  height: 30px;
  padding: 0 16px 0 0;
  border-top-width: 0;
  border-bottom-width: 1px;
  border-bottom-color: #ccc;
}

.grid .row-no i {
  right: 9px;
  top: 13px;
}

.grid td {
  height: 30px;
  padding: 0;
  text-align: center;
  color: #444;
  border: 1px solid #ccc;
}

.vscroll {
  position: relative;
  background: #f1f1f1;
}

.vscroll .tri-up {
  position: absolute;
  top: 14px;
  left: 9px;
}

.vscroll .vdown {
  position: absolute;
  top: 150px;
  left: 9px;
}

.vthumb {
  position: absolute;
  top: 34px;
  left: 2px;
  width: 30px;
  height: 17px;
  background: #c1c1c1;
}

.hscroll {
  position: relative;
  background: #f1f1f1;
}

.hscroll .tri-left {
  position: absolute;
  left: 12px;
  top: 9px;
}

.hscroll .tri-right {
  position: absolute;
  right: 11px;
  top: 9px;
}

.hthumb {
  position: absolute;
  left: 34px;
  top: 2px;
  width: 491px;
  height: 30px;
  background: #c1c1c1;
}

.corner {
  background: #dcdcdc;
}

.splitter {
  height: 11px;
  display: flex;
  align-items: center;
  justify-content: center;
  background: #506784;
}

.grip {
  width: 24px;
  height: 7px;
  border-top: 1px solid #fff;
  border-bottom: 1px solid #fff;
  position: relative;
}

.grip::after {
  content: "";
  position: absolute;
  left: 0;
  right: 0;
  top: 2px;
  height: 1px;
  background: #fff;
}

.plot {
  padding: 54px 0 0 106px;
}

.plot-title {
  width: 1627px;
  height: 24px;
  margin-bottom: 63px;
  font-size: 22.500px;
  line-height: 24px;
  text-align: center;
  color: #dde2ea;
}

.map {
  width: 1627px;
  height: 847px;
  position: relative;
}

.map-svg {
  display: block;
  background: #a1cfe0;
}

.rough {
  filter: url(#rough);
}

.ld {
  fill: #dedede;
}

.wt {
  fill: #a1cfe0;
}

.bd {
  fill: none;
  stroke: #aaa;
  stroke-width: 1;
  vector-effect: non-scaling-stroke;
}

.labels text {
  font-size: 18px;
  text-anchor: middle;
  fill: #7c7c7c;
  stroke: rgba(255, 255, 255, .55);
  stroke-width: 2.500px;
  paint-order: stroke;
}

.dots-z,
.dots-p {
  fill: none;
  stroke: #1b74b8;
  stroke-linecap: round;
}

.dots-z {
  stroke-width: 24px;
}

.dots-p {
  stroke-width: 8px;
}

.red-mark {
  position: absolute;
  right: -1px;
  top: 174px;
  width: 20px;
  height: 11px;
  background: #ed1c24;
}

.chat {
  position: absolute;
  left: 2347px;
  top: 1327px;
  width: 80px;
  height: 80px;
  display: flex;
  align-items: center;
  justify-content: center;
  border-radius: 50%;
  background: #a4b2c9;
  box-shadow: 0 1px 8px rgba(80, 103, 132, .3);
}
```
